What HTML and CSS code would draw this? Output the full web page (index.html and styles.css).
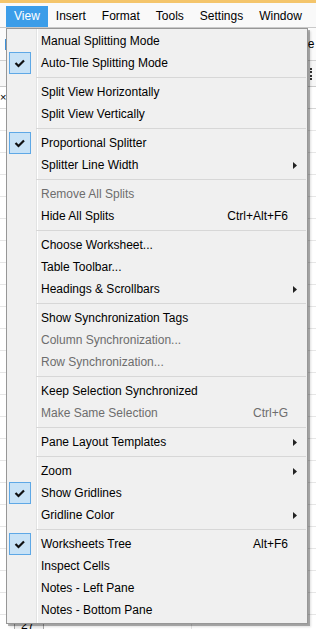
FILE: index.html
```html
<!DOCTYPE html>
<html lang="en">
<head>
    <meta charset="UTF-8">
    <title>View menu</title>
    <link rel="stylesheet" href="styles.css">
</head>
<body>
<div class="titlebar"></div>
<ul class="menubar">
    <li class="open">View</li>
    <li>Insert</li>
    <li>Format</li>
    <li>Tools</li>
    <li>Settings</li>
    <li>Window</li>
</ul>
<div class="tb1">
    <span class="mark"></span>
    <span class="lbl">Note</span>
</div>
<div class="tb2">
    <span class="grip"></span>
</div>
<div class="tabs"><span class="close">×</span></div>
<div class="sheet">
    <div class="rowhead">27</div>
</div>

<div class="menu">
    <div class="item"><span class="ck"></span><span class="tx">Manual Splitting Mode</span><span class="arr"></span></div>
    <div class="item"><span class="ck on"><svg width="22" height="22" viewBox="0 0 22 22"><path d="M6.5 11 L9.5 14 L15 8.5" fill="none" stroke="#111" stroke-width="2.2"/></svg></span><span class="tx">Auto-Tile Splitting Mode</span><span class="arr"></span></div>
    <div class="sep"></div>
    <div class="item"><span class="ck"></span><span class="tx">Split View Horizontally</span><span class="arr"></span></div>
    <div class="item"><span class="ck"></span><span class="tx">Split View Vertically</span><span class="arr"></span></div>
    <div class="sep"></div>
    <div class="item"><span class="ck on"><svg width="22" height="22" viewBox="0 0 22 22"><path d="M6.5 11 L9.5 14 L15 8.5" fill="none" stroke="#111" stroke-width="2.2"/></svg></span><span class="tx">Proportional Splitter</span><span class="arr"></span></div>
    <div class="item"><span class="ck"></span><span class="tx">Splitter Line Width</span><span class="arr"><svg width="4" height="7" viewBox="0 0 4 7"><polygon points="0,0 4,3.5 0,7" fill="#222"/></svg></span></div>
    <div class="sep"></div>
    <div class="item off"><span class="ck"></span><span class="tx">Remove All Splits</span><span class="arr"></span></div>
    <div class="item"><span class="ck"></span><span class="tx">Hide All Splits</span><span class="key">Ctrl+Alt+F6</span><span class="arr"></span></div>
    <div class="sep"></div>
    <div class="item"><span class="ck"></span><span class="tx">Choose Worksheet...</span><span class="arr"></span></div>
    <div class="item"><span class="ck"></span><span class="tx">Table Toolbar...</span><span class="arr"></span></div>
    <div class="item"><span class="ck"></span><span class="tx">Headings &amp; Scrollbars</span><span class="arr"><svg width="4" height="7" viewBox="0 0 4 7"><polygon points="0,0 4,3.5 0,7" fill="#222"/></svg></span></div>
    <div class="sep"></div>
    <div class="item"><span class="ck"></span><span class="tx">Show Synchronization Tags</span><span class="arr"></span></div>
    <div class="item off"><span class="ck"></span><span class="tx">Column Synchronization...</span><span class="arr"></span></div>
    <div class="item off"><span class="ck"></span><span class="tx">Row Synchronization...</span><span class="arr"></span></div>
    <div class="sep"></div>
    <div class="item"><span class="ck"></span><span class="tx">Keep Selection Synchronized</span><span class="arr"></span></div>
    <div class="item off"><span class="ck"></span><span class="tx">Make Same Selection</span><span class="key">Ctrl+G</span><span class="arr"></span></div>
    <div class="sep"></div>
    <div class="item"><span class="ck"></span><span class="tx">Pane Layout Templates</span><span class="arr"><svg width="4" height="7" viewBox="0 0 4 7"><polygon points="0,0 4,3.5 0,7" fill="#222"/></svg></span></div>
    <div class="sep"></div>
    <div class="item"><span class="ck"></span><span class="tx">Zoom</span><span class="arr"><svg width="4" height="7" viewBox="0 0 4 7"><polygon points="0,0 4,3.5 0,7" fill="#222"/></svg></span></div>
    <div class="item"><span class="ck on"><svg width="22" height="22" viewBox="0 0 22 22"><path d="M6.5 11 L9.5 14 L15 8.5" fill="none" stroke="#111" stroke-width="2.2"/></svg></span><span class="tx">Show Gridlines</span><span class="arr"></span></div>
    <div class="item"><span class="ck"></span><span class="tx">Gridline Color</span><span class="arr"><svg width="4" height="7" viewBox="0 0 4 7"><polygon points="0,0 4,3.5 0,7" fill="#222"/></svg></span></div>
    <div class="sep"></div>
    <div class="item"><span class="ck on"><svg width="22" height="22" viewBox="0 0 22 22"><path d="M6.5 11 L9.5 14 L15 8.5" fill="none" stroke="#111" stroke-width="2.2"/></svg></span><span class="tx">Worksheets Tree</span><span class="key">Alt+F6</span><span class="arr"></span></div>
    <div class="item"><span class="ck"></span><span class="tx">Inspect Cells</span><span class="arr"></span></div>
    <div class="item"><span class="ck"></span><span class="tx">Notes - Left Pane</span><span class="arr"></span></div>
    <div class="item"><span class="ck"></span><span class="tx">Notes - Bottom Pane</span><span class="arr"></span></div>
</div>
</body>
</html>
```

FILE: styles.css
```css
* {
    margin: 0;
    padding: 0;
    box-sizing: border-box;
    list-style: none;
}
body {
    width: 316px;
    height: 631px;
    overflow: hidden;
    position: relative;
    background: #fff;
    color: #000;
    font: 12px "Liberation Sans", Arial, sans-serif;
}
.titlebar {
    height: 3px;
    background: #f4c56b;
}
.menubar {
    display: flex;
    height: 24px;
    padding: 3px 0 0 6px;
    background: #f9f9f9;
}
.menubar li {
    height: 21px;
    line-height: 20px;
    padding: 0 8px;
}
.menubar li.open {
    background: #3b9de9;
    color: #fff;
}
.tb1 {
    display: flex;
    align-items: center;
    height: 34px;
    border-top: 1px solid #c9c9c9;
    border-bottom: 1px solid #d0d0d0;
    background: #fbfbfb;
}
.tb1 .mark {
    width: 2px;
    height: 11px;
    margin-left: 5px;
    background: #3d8fd6;
}
.tb1 .lbl {
    margin-left: 282px;
}
.tb2 {
    height: 26px;
    border-bottom: 1px solid #c9c9c9;
    background: #f7f7f7;
    padding: 7px 0 0 310px;
}
.tb2 .grip {
    display: block;
    width: 2px;
    height: 12px;
    border-left: 2px dotted #333;
}
.tabs {
    height: 22px;
    line-height: 20px;
    border-bottom: 1px solid #d6d6d6;
}
.tabs .close {
    font-size: 11px;
}
.sheet {
    height: 520px;
    display: flex;
    align-items: flex-end;
    padding-left: 14px;
    background:
        repeating-linear-gradient(to right, transparent 0 191px, #e4e4e4 191px 192px, transparent 192px 266px),
        repeating-linear-gradient(to bottom, transparent 0 21px, #e6e6e6 21px 22px);
}
.rowhead {
    width: 30px;
    height: 12px;
    padding: 1px 0 0 6px;
    border: 1px solid #a8a8a8;
    border-bottom: 0;
    background: #f4f4f4;
    line-height: 12px;
}

/* dropdown */
.menu {
    position: absolute;
    left: 6px;
    top: 28px;
    width: 302px;
    padding: 1px 0 2px;
    border: 1px solid #979797;
    box-shadow: 2px 2px 0 rgba(0, 0, 0, .28), 3px 3px 2px rgba(0, 0, 0, .12);
    background:
        linear-gradient(to right, transparent 29px, #e2e3e3 29px, #e2e3e3 30px, #fff 30px, #fff 31px, transparent 31px),
        #f0f0f0;
}
.item {
    display: flex;
    align-items: center;
    height: 22px;
}
.ck {
    width: 22px;
    height: 22px;
    margin-left: 2px;
}
.ck.on {
    background: #c8e2f6;
    border: 1px solid #5ea8e6;
}
.ck svg {
    display: block;
    margin: -1px;
}
.tx {
    flex: 1;
    padding-left: 10px;
}
.key {
    white-space: nowrap;
}
.arr {
    display: flex;
    align-items: center;
    width: 19px;
    padding-left: 5px;
}
.off {
    color: #6d6d6d;
}
.sep {
    height: 7px;
    margin: 0 1px 0 29px;
    background: linear-gradient(#d7d7d7, #d7d7d7) 0 3px / 100% 1px no-repeat;
}
```
